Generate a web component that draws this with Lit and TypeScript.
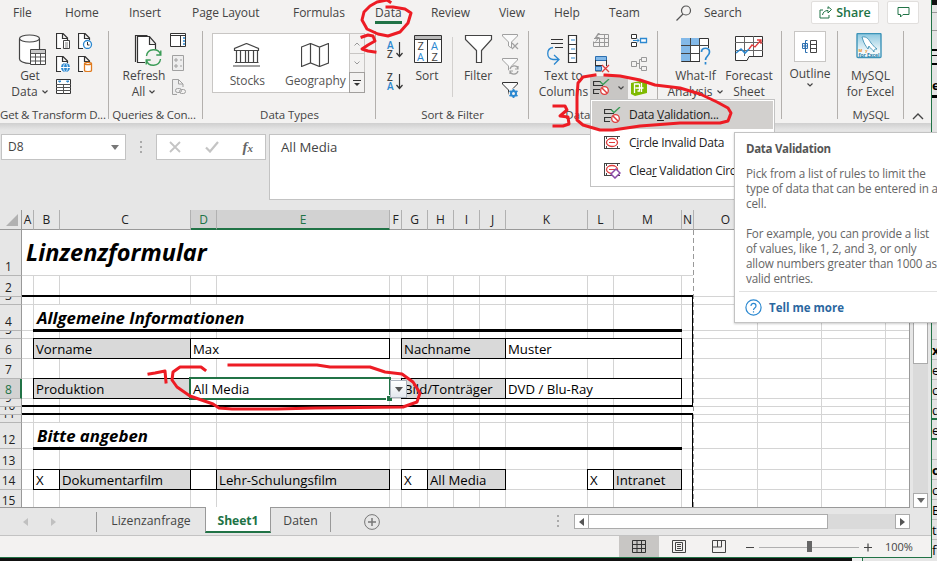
import { LitElement, html, svg, css, nothing } from "lit";
import { customElement } from "lit/decorators.js";
import { classMap } from "lit/directives/class-map.js";
import { styleMap } from "lit/directives/style-map.js";

const icon = (x: number, y: number, w: number, h: number, body: unknown) =>
  html`<svg class="ic" width=${w} height=${h} viewBox="${x} ${y} ${w} ${h}">${body}</svg>`;

const chevron = html`<svg class="chev" width="8" height="6" viewBox="0 0 8 6"><path d="M1.5 1.5 4 4 6.5 1.5" fill="none" stroke="#444" stroke-width="1.2"/></svg>`;

const page = (x: number, y: number) => svg`<path d="M${x + 5} ${y + 15.5}H${x + 0.5}V${y + 0.5}H${x + 7}L${x + 11.5} ${y + 5}V${y + 7}M${x + 6.5} ${y + 0.5}V${y + 5.5}H${x + 11.5}" fill="#fff" stroke="#333" stroke-width="1.2"/>`;

const validation = (x: number, y: number) => svg`
  <path d="M${x + 8} ${y + 2.5}H${x + 0.5}V${y + 6.5}H${x + 10}M${x + 7} ${y + 10.5}H${x + 0.5}V${y + 14.5}H${x + 6}" fill="none" stroke="#333" stroke-width="1.2"/>
  <path d="M${x + 7} ${y + 2.5}l3 3L${x + 16} ${y}" fill="none" stroke="#3a9b56" stroke-width="1.3"/>
  <circle cx=${x + 11.5} cy=${y + 11.5} r="3.8" fill="#fff" stroke="#e03c3c" stroke-width="1.3"/>
  <path d="M${x + 9} ${y + 9}l5 5" stroke="#e03c3c" stroke-width="1.5"/>`;

const funnel = (x: number, y: number, color: string) => svg`<path d="M${x + 0.5} ${y + 0.5}H${x + 15.5}V${y + 2}L${x + 9.5} ${y + 8}V${y + 14}L${x + 6.5} ${y + 12}V${y + 8}L${x + 0.5} ${y + 2}Z" fill="#fafafa" stroke=${color}/>`;

const smallFrame = (x: number, y: number) => svg`<path d="M${x} ${y + 0.5}h16M${x} ${y + 12.5}h16M${x + 2.5} ${y}v3m0 7v3M${x + 13.5} ${y}v3m0 7v3M${x + 0.5} ${y}v13" fill="none" stroke="#444"/><ellipse cx=${x + 8} cy=${y + 6.5} rx="5.5" ry="4" fill="#fff" stroke="#e03c3c" stroke-width="1.3"/><path d="M${x + 5} ${y + 6.5}h6" stroke="#e03c3c"/>`;

const COLS: [string, number][] = [
  ["A", 12], ["B", 26], ["C", 131], ["D", 26], ["E", 173], ["F", 12], ["G", 26], ["H", 26], ["I", 26],
  ["J", 26], ["K", 82], ["L", 26], ["M", 68], ["N", 12], ["O", 64], ["P", 64], ["Q", 64], ["", 24],
];
const ROWS = [46, 21, 8, 26, 8, 20, 20, 20, 8, 8, 8, 26, 21, 20, 20];

interface Cell { col: number; span: number; row: number; text: string; grey?: boolean }
const CELLS: Cell[] = [
  { col: 2, span: 2, row: 6, text: "Vorname", grey: true },
  { col: 4, span: 2, row: 6, text: "Max" },
  { col: 7, span: 4, row: 6, text: "Nachname", grey: true },
  { col: 11, span: 3, row: 6, text: "Muster" },
  { col: 2, span: 2, row: 8, text: "Produktion", grey: true },
  { col: 4, span: 2, row: 8, text: "All Media" },
  { col: 7, span: 4, row: 8, text: "Bild/Tonträger", grey: true },
  { col: 11, span: 3, row: 8, text: "DVD / Blu-Ray" },
  { col: 2, span: 1, row: 14, text: "X" },
  { col: 3, span: 1, row: 14, text: "Dokumentarfilm", grey: true },
  { col: 4, span: 1, row: 14, text: "" },
  { col: 5, span: 1, row: 14, text: "Lehr-Schulungsfilm", grey: true },
  { col: 7, span: 1, row: 14, text: "X" },
  { col: 8, span: 3, row: 14, text: "All Media", grey: true },
  { col: 12, span: 1, row: 14, text: "X" },
  { col: 13, span: 1, row: 14, text: "Intranet", grey: true },
];

@customElement("excel-ribbon")
class ExcelRibbon extends LitElement {
  static styles = css`
    :host { display: block; height: 123px; background: #f3f2f1; color: #444; font: 12px/16px "Open Sans", "Noto Sans", sans-serif; }
    svg { display: block; flex: none; }
    .tabs { height: 28px; padding-left: 13px; box-sizing: border-box; display: grid; grid-template-columns: 52px 64px 63px 101px 82px 56px 68px 55px 55px 67px 28px 106px 76px 45px; align-items: center; }
    .tab { line-height: 25px; height: 28px; white-space: nowrap; letter-spacing: -.05px; }
    .tab.on span { display: inline-block; height: 21px; border-bottom: 3px solid #217346; letter-spacing: .15px; }
    .btn { height: 23px; background: #fff; border: 1px solid #e1dfdd; border-radius: 2px; display: flex; align-items: center; justify-content: center; gap: 4px; color: #217346; font-weight: 600; font-size: 12.5px; box-sizing: border-box; margin-top: -3px; }
    .share { width: 68px; margin-left: 1px; }
    .note { width: 32px; margin-left: 1px; }
    .body { display: flex; height: 95px; }
    .group { position: relative; box-sizing: border-box; height: 95px; display: flex; flex-direction: column; }
    .group::after { content: ""; position: absolute; right: 0; top: 3px; height: 88px; width: 1px; background: #b3b0ad; }
    .row { display: flex; height: 78px; }
    .cap { text-align: center; line-height: 17px; height: 17px; white-space: nowrap; font-size: 11.5px; margin-top: 1px; letter-spacing: -.05px; }
    .g1 .cap, .g2 .cap { letter-spacing: -.2px; padding-right: 4px; }
    .big { display: flex; flex-direction: column; align-items: center; text-align: center; white-space: nowrap; box-sizing: border-box; }
    .big svg.ic { height: auto; margin: 6px 0 2px; }
    .ln { line-height: 16px; display: flex; align-items: center; gap: 3px; }
    .col { display: flex; flex-direction: column; padding-top: 5px; gap: 7px; }
    .g1 { width: 109px; } .g2 { width: 94px; } .g3 { width: 173px; } .g4 { width: 153px; }
    .g5 { width: 129px; } .g6 { width: 124px; } .g7 { width: 56px; } .g8 { width: 66px; }
    .get { width: 56px; padding-left: 4px; }
    .get svg.ic { margin-left: 5px; }
    .c2 { margin-left: 7px; }
    .refresh { width: 70px; }
    .refresh svg.ic { margin-left: 7px; }
    .qcol { margin-left: -9px; }
    .gallery { display: flex; margin: 5px 0 0 9px; width: 153px; height: 60px; box-sizing: border-box; border: 1px solid #c8c6c4; background: #fff; }
    .dt { display: flex; flex-direction: column; align-items: center; padding-top: 9px; gap: 6px; color: #555; box-sizing: border-box; letter-spacing: -.1px; }
    .dt1 { width: 69px; } .dt2 { width: 68px; }
    .arrows { margin-left: auto; width: 14px; display: grid; grid-template-rows: 20px 19px 20px; border-left: 1px solid #c8c6c4; }
    .arrows div { display: grid; place-items: center; background: #f3f2f1; border-bottom: 1px solid #c8c6c4; box-sizing: border-box; }
    .arrows div:last-child { outline: 1px solid #a19f9d; border: 0; height: 19px; }
    .az { width: 28px; padding: 13px 0 0 10px; gap: 13px; }
    .sort { width: 46px; margin-left: -10px; }
    .sep { width: 1px; height: 60px; background: #d2d0ce; margin: 9px 0 0 2px; }
    .filter { width: 50px; }
    .fcol { padding-top: 6px; margin-left: -1px; }
    .ttc { width: 66px; padding-left: 3px; }
    .ttc svg.ic { margin-left: -3px; }
    .t2 { gap: 6px; width: 38px; margin-left: -2px; }
    .dv { display: flex; align-items: center; gap: 7px; width: 38px; height: 23px; background: #c8c6c4; margin: -3px 0 0 -3px; padding-left: 3px; box-sizing: border-box; }
    .t3 { gap: 8px; }
    .whatif { width: 66px; padding-left: 9px; }
    .big.whatif svg.ic { margin: 8px 0 2px; }
    .forecast { width: 56px; margin-left: -3px; }
    .outline { width: 56px; }
    .obox { width: 30px; height: 29px; border: 1px solid #c8c6c4; background: #fff; display: grid; place-items: center; margin: 3px 0 4px; }
    .big .obox svg.ic { margin: 0; }
    .mysql { width: 65px; }
    .big.mysql svg.ic { margin: 5px 4px 5px 0; }
    .end { flex: 1; display: flex; align-items: flex-end; padding: 0 0 3px 8px; }
  `;
  render() {
    const blue = "#2b88d0";
    return html`
      <div class="tabs">
        ${["File", "Home", "Insert", "Page Layout", "Formulas", "Data", "Review", "View", "Help", "Team"].map((t) => html`<span class=${classMap({ tab: true, on: t === "Data" })}><span>${t}</span></span>`)}
        <svg width="18" height="18" viewBox="0 0 18 18"><g fill="none" stroke="#555" stroke-width="1.2"><circle cx="10" cy="5.500" r="4.500"/><path d="M7 9 .5 15.500"/></g></svg>
        <span class="tab">Search</span>
        <div class="btn share"><svg width="13" height="13" viewBox="0 0 13 13"><path d="M4 4H1v8h9V9M3.500 9C4 6 6 4.500 9 4.500V7l3.500-3.500L9 .7V3" fill="none" stroke="#217346"/></svg>Share</div>
        <div class="btn note"><svg width="13" height="11" viewBox="0 0 13 11"><path d="M1 .5h11v7H6L3.500 10V7.500H1z" fill="none" stroke="#217346"/></svg></div>
      </div>
      <div class="body">
        <div class="group g1">
          <div class="row">
            <div class="big get">
              ${icon(18, 34, 29, 32, svg`<path d="M20 40v19c2 3 5 4 10 4V49h9V40z" fill="#fff"/><path d="M19.500 39v20c0 2 4 4.500 11 4.500M39.500 39v10" fill="none" stroke="#444" stroke-width="1.2"/><ellipse cx="29.500" cy="38.500" rx="10" ry="3.500" fill="#fafafa" stroke="#444" stroke-width="1.2"/><path d="M30.500 49.500h15v15h-15z" fill="#fff" stroke="#444"/><path d="M31 50h14v3H31z" fill="#c8c8c8"/><path d="M30.500 53.500h15M30.500 57h15m-15 4h15M35.500 53v11m5-11v11" stroke="#555"/>`)}
              <span class="ln">Get</span><span class="ln">Data ${chevron}</span>
            </div>
            <div class="col">
              ${icon(56, 33, 15, 16, svg`${page(56, 33)}<path d="M63.500 40.500h6v8h-6z" fill="#fff" stroke="#444"/><path d="M65 43h3m-3 2h3m-3 2h3" stroke="#666" stroke-width=".8"/>`)}
              ${icon(56, 56, 15, 16, svg`${page(56, 56)}<circle cx="65.500" cy="67.500" r="4.500" fill=${blue}/><path d="M61 67.500h9" stroke="#fff"/><ellipse cx="65.500" cy="67.500" rx="2" ry="4.200" fill="none" stroke="#fff" stroke-width=".8"/>`)}
              ${icon(54, 79, 15, 16, svg`<path d="M54.500 79.500h14v14h-14z" fill="#fff" stroke="#333"/><path d="M54 84.500h15m-15 3h15m-15 3h15M61.500 84v10" stroke="#555"/><path d="m56.500 81 2.500 0-1.300 1.300zm8 0h2.500l-1.300 1.300z" fill=${blue} stroke=${blue}/>`)}
            </div>
            <div class="col c2">
              ${icon(78, 33, 15, 16, svg`${page(78, 33)}<circle cx="87.500" cy="44.500" r="4" fill="#fff" stroke=${blue} stroke-width="1.3"/><path d="M87.500 42v3h2" fill="none" stroke="#333"/>`)}
              ${icon(78, 56, 15, 16, svg`${page(78, 56)}<path d="M84.500 63.500c0-1.500 7-1.500 7 0v7c0 1.500-7 1.500-7 0zc0 1.500 7 1.500 7 0" fill="#fff" stroke="#e07b1f" stroke-width="1.300"/>`)}
            </div>
          </div>
          <div class="cap">Get &amp; Transform D...</div>
        </div>
        <div class="group g2">
          <div class="row">
            <div class="big refresh">
              ${icon(133, 34, 29, 32, svg`<path d="M135.500 62V35.500h12" fill="none" stroke="#333" stroke-width="1.200"/><path d="M145 62.500h-7.500V36.500h12l6 7v6M149.500 36.500v8h6" fill="#fff" stroke="#333" stroke-width="1.200"/><circle cx="153.500" cy="57.500" r="8" fill="#f3f2f1"/><path d="M146.500 56c1-8 12-8 14-1.500m.3-4v4.500h-4.500M160.500 59c-1 8-12 8-14 1.500m-.3 4V60h4.500" fill="none" stroke="#3a9b56" stroke-width="1.400"/>`)}
              <span class="ln">Refresh</span><span class="ln">All ${chevron}</span>
            </div>
            <div class="col qcol">
              ${icon(170, 35, 16, 14, svg`<path d="M170.500 35.500h15v13h-15z" fill="#fff" stroke="#333"/><path d="M170 37.500h16M180.500 38v10" stroke="#333"/><path d="M183 40h2m-2 3h2m-2 3h2" stroke=${blue} stroke-width="1.500"/>`)}
              ${icon(170, 57, 16, 17, svg`<path d="M172.500 58.500h11v15h-11z" fill="#eee" stroke="#a0a0a0"/><path d="M175 62h2v2h-2zm0 6h2v2h-2zm5 1h2m-2-6h2" fill="none" stroke="#a0a0a0"/>`)}
              ${icon(170, 81, 16, 17, svg`<path d="M177 97.500h-4.500V82.500h6l4.500 4.500v3M178.500 82.500V87h4.500" fill="#eee" stroke="#a0a0a0"/><rect x="175.500" y="91.500" width="6" height="4" rx="2" fill="none" stroke="#a0a0a0"/><rect x="179.500" y="92.500" width="6" height="4" rx="2" fill="none" stroke="#a0a0a0"/>`)}
            </div>
          </div>
          <div class="cap">Queries &amp; Con...</div>
        </div>
        <div class="group g3">
          <div class="row"><div class="gallery">
            <div class="dt dt1">${icon(233, 43, 28, 24, svg`<path d="M234.500 50.500v-2L246.500 43.500l12 5v2zM236.500 50v12.500M240.500 50v12.500M245.500 50v12.500M248.500 50v12.500M253.500 50v12.500M257.500 50v12.500M235 62.500h23.500M233 66h27" fill="none" stroke="#444" stroke-width="1.200"/>`)}<span>Stocks</span></div>
            <div class="dt dt2">${icon(301, 43, 28, 24, svg`<path d="m301.500 47 9-3.500 9 3.500 9-3.500V63l-9 3.500-9-3.500-9 3.500zM310.500 43.500V63M319.500 47v19.500" fill="none" stroke="#444" stroke-width="1.200"/>`)}<span>Geography</span></div>
            <div class="arrows">
              <div><svg width="6" height="4"><path d="M.5 3.500 3 1l2.500 2.500" fill="none" stroke="#999"/></svg></div>
              <div><svg width="6" height="4"><path d="M.5.500 3 3 5.500.5" fill="none" stroke="#999"/></svg></div>
              <div><svg width="8" height="6"><path d="M0 .5h8" stroke="#333"/><path d="M1 3l3 3 3-3z" fill="#333"/></svg></div>
            </div>
          </div></div>
          <div class="cap">Data Types</div>
        </div>
        <div class="group g4">
          <div class="row">
            <div class="col az">
              ${["AZ", "ZA"].map((s) => html`<svg width="18" height="19" viewBox="0 0 18 19" font-family="Open Sans" font-size="10" font-weight="600"><text x="1" y="8" fill=${s[0] === "A" ? blue : "#444"}>${s[0]}</text><text x="1" y="17" fill=${s[1] === "A" ? blue : "#444"}>${s[1]}</text><path d="M13.500 1v14.500M10.500 12l3 3.500 3-3.500" fill="none" stroke="#333" stroke-width="1.200"/></svg>`)}
            </div>
            <div class="big sort">
              ${icon(412, 34, 29, 32, svg`<path d="M413.500 35.500h27v27h-27z" fill="#fff" stroke="#333"/><path d="M414 36h26v3h-26z" fill="#bbb"/><path d="M413.500 39.500h27M426.500 39v23" stroke="#333"/><g font-family="Open Sans" font-size="11"><text x="416.500" y="50" fill="#444">Z</text><text x="416" y="60.500" fill=${blue}>A</text><text x="430" y="50" fill=${blue}>A</text><text x="430.500" y="60.500" fill="#444">Z</text></g>`)}
              <span class="ln">Sort</span>
            </div>
            <div class="sep"></div>
            <div class="big filter">
              ${icon(463, 34, 29, 32, svg`<path d="M464.500 35.500h26v4l-10 11v12h-5v-12l-11-11z" fill="#fff" stroke="#444" stroke-width="1.200"/>`)}
              <span class="ln">Filter</span>
            </div>
            <div class="col fcol">
              ${icon(502, 34, 18, 17, svg`${funnel(502, 34, "#a0a0a0")}<path d="m512 43 6 6m0-6-6 6" stroke="#a0a0a0" stroke-width="1.200"/>`)}
              ${icon(502, 58, 18, 17, svg`${funnel(502, 58, "#a0a0a0")}<circle cx="514" cy="70" r="5" fill="#f3f2f1"/><path d="M510 69c1-4 7-4 8-.5m0-2.500v3h-3M518 71c-1 4-7 4-8 .5m0 2.500v-3h3" fill="none" stroke="#a0a0a0" stroke-width="1.200"/>`)}
              ${icon(502, 82, 18, 17, svg`${funnel(502, 82, "#333")}<circle cx="513.500" cy="93.500" r="5" fill="#f3f2f1"/><circle cx="513.500" cy="93.500" r="2.500" fill="none" stroke=${blue} stroke-width="2"/><path d="M513.500 89v2M513.500 96v2M509.500 91l1.700 1M515.800 95l1.700 1M509.500 96l1.700-1M515.800 92l1.700-1" stroke=${blue} stroke-width="1.800"/>`)}
            </div>
          </div>
          <div class="cap">Sort &amp; Filter</div>
        </div>
        <div class="group g5">
          <div class="row">
            <div class="big ttc">
              ${icon(546, 34, 32, 32, svg`<path d="M551 39.500h12M551 43.500h12M555 47.500h8" stroke="#333" stroke-width="1.200"/><path d="M568.500 35.500h8v27h-8zM568 44.500h9m-9 9h9" fill="#fff" stroke="#333" stroke-width="1.200"/><path d="M571 40h4m-4 9h4m-4 9h4" stroke=${blue}/><path d="M553 47.500c-7 1-7 11 0 12h5.500m-4.500-4.500 5 4.500-5 5" fill="none" stroke=${blue} stroke-width="1.300"/>`)}
              <span class="ln">Text to</span><span class="ln">Columns</span>
            </div>
            <div class="col t2">
              ${icon(593, 33, 17, 17, svg`<path d="M597.500 34.500h11v12h-15v-5M594 42.500h15M594 38.500h15M599.500 38v9M604.500 34v12" fill="none" stroke="#999"/><path d="m598 33-4 6h3l-3 5 6-7h-3l3-4z" fill="#999"/>`)}
              ${icon(593, 56, 17, 17, svg`<path d="M595.500 56.500h11v4h-11z" fill="#83b9e8" stroke="#2b6fb0"/><path d="M606.500 60v6M595.500 60v11h6M595 65.500h8" fill="none" stroke="#333"/><path d="M595.500 66.500h6v4h-6z" fill="#83b9e8" stroke="#2b6fb0"/><path d="m602 65 7 7m0-7-7 7" stroke="#e03c3c" stroke-width="1.300"/>`)}
              <div class="dv">${icon(593, 79, 17, 17, validation(593, 79))}${chevron}</div>
            </div>
            <div class="col t3">
              ${icon(631, 33, 17, 15, svg`<path d="M631.500 34.500h5v4h-5zm0 8h5v4h-5z" fill="#fff" stroke="#333"/><path d="M640.500 38.500h6v4h-6z" fill="#fff" stroke=${blue} stroke-width="1.300"/><path d="M633 40.500h6m-2-2 2 2-2 2" fill="none" stroke=${blue}/>`)}
              ${icon(631, 56, 17, 16, svg`<path d="M631.500 61.500h5v5h-5zM641.500 57.500h5v4h-5zm0 9h5v4h-5zM637 63.500h2.500M641 59.500h-1.500v9h1.500" fill="none" stroke="#999"/>`)}
              ${icon(631, 80, 17, 17, svg`<path d="M631 83 644 80l3 3v10L635 96l-4-2z" fill="#7fba00"/><path d="M634.500 93V84h5m0 0v7h-2m4-8v9m-6-4h8" fill="none" stroke="#fff" stroke-width="1.300"/>`)}
            </div>
          </div>
          <div class="cap">Data Tools</div>
        </div>
        <div class="group g6">
          <div class="row">
            <div class="big whatif">
              ${icon(680, 36, 32, 30, svg`<path d="M681.500 38.500h27v23h-27z" fill="#fff" stroke="#333"/><path d="M681 38h10v23h-10zM691 38h9v7h-9z" fill="#83b9e8"/><path d="M681 45.500h28M681 53.500h28M690.500 38v23M699.500 38v23" stroke="#444"/><path d="M700 48h12v18h-12z" fill="#f3f2f1"/><path d="M701.500 52c0-5 8-5 8 0 0 4-4 4-4 8m0 2v2.500" fill="none" stroke="#2b88d0" stroke-width="1.700"/>`)}
              <span class="ln">What-If</span><span class="ln">Analysis ${chevron}</span>
            </div>
            <div class="big forecast">
              ${icon(734, 34, 30, 32, svg`<path d="M735.500 36.500h27v20H749l-2 4h-11.500z" fill="#fff" stroke="#333"/><path d="M735 42.500h28M735 50.500h28M744.500 36v20M753.500 36v20" stroke="#666"/><path d="m736 53 5-4 4 4 4-4" fill="none" stroke=${blue} stroke-width="1.600"/><path d="m749 49 3-4 3 2 6-7m-4 0h4v4" fill="none" stroke="#e03c3c" stroke-width="1.300"/>`)}
              <span class="ln">Forecast</span><span class="ln">Sheet</span>
            </div>
          </div>
          <div class="cap">${nothing}</div>
        </div>
        <div class="group g7"><div class="row"><div class="big outline">
          <div class="obox">${icon(802, 38, 16, 16, svg`<path d="M807.500 39.500h-2v12h2M802.500 42.500h5v5h-5zM805 43v4m-2-2h4" fill="none" stroke="#2b6fb0"/><path d="M810.500 39.500h6v12h-6zm0 4h6m-6 4h6" fill="none" stroke="#444"/>`)}</div>
          <span class="ln">Outline</span><span class="ln">${chevron}</span>
        </div></div></div>
        <div class="group g8"><div class="row"><div class="big mysql">
          ${icon(855, 33, 26, 30, svg`<defs><linearGradient id="sky" x2="0" y2="1"><stop stop-color="#8cc8e0"/><stop offset=".75" stop-color="#f2f8fa"/></linearGradient></defs><rect x="856" y="33.500" width="24" height="24" rx="1" fill="url(#sky)" stroke="#3d94b8" stroke-width="1.400"/><path d="M861 37c5-1 7 3 9 6 2 2 3 4 6 6-3 0-3 1-3 3-2-4-4-3-5-6l-1 3c-3-4-4-6-5-9z" fill="#fff" stroke="#2f86ad" stroke-width=".8"/><text x="857.500" y="51.500" font-size="4" font-family="Open Sans" font-weight="700" fill="#e8922a" textLength="9">My</text><text x="857.500" y="56.500" font-size="5" font-family="Open Sans" font-weight="700" fill="#2b7fa8" textLength="21">for Excel</text>`)}
          <span class="ln">MySQL</span><span class="ln">for Excel</span>
        </div></div><div class="cap">MySQL</div></div>
        <div class="end"><svg width="12" height="8" viewBox="0 0 12 8"><path d="m1 7 5-5 5 5" fill="none" stroke="#444" stroke-width="1.400"/></svg></div>
      </div>`;
  }
}

@customElement("sheet-grid")
class SheetGrid extends LitElement {
  static styles = css`
    :host { display: block; width: 910px; height: 298px; overflow: hidden; isolation: isolate; box-sizing: border-box; border-right: 1px solid #999; font: 12px/16px "Open Sans", "Noto Sans", sans-serif; color: #000; }
    .grid { display: grid; background: #fff; position: relative; }
    .corner { grid-area: 1/1; background: #e6e6e6; border-right: 1px solid #999; border-bottom: 1px solid #999; display: flex; justify-content: flex-end; align-items: flex-end; padding: 0 3px 3px 0; }
    .tri { border-left: 12px solid transparent; border-bottom: 12px solid #b1b1b1; }
    .ch { grid-row: 1; background: #e6e6e6; border-right: 1px solid #b1b1b1; border-bottom: 1px solid #999; line-height: 20px; color: #222; white-space: nowrap; overflow: hidden; display: flex; justify-content: center; }
    .ch.sel { background: #d2d2d2; color: #217346; border-bottom: 2px solid #217346; }
    .rh { grid-column: 1; background: #e6e6e6; border-right: 1px solid #999; border-bottom: 1px solid #b5b5b5; overflow: hidden; display: flex; align-items: flex-end; justify-content: center; padding-right: 4px; color: #222; }
    .rh.tiny { align-items: flex-start; }
    .rh.tiny span { margin-top: -9px; }
    .rh.sel { background: #d2d2d2; color: #217346; border-right: 2px solid #217346; padding-right: 3px; }
    .c { border-right: 1px solid #d4d4d4; border-bottom: 1px solid #d4d4d4; }
    .cell { border: 1px solid #000; margin: -1px 0 0 -1px; background: #fff; padding-left: 2px; font-size: 13.2px; line-height: 20px; white-space: nowrap; overflow: hidden; z-index: 1; }
    .cell.grey { background: #d9d9d9; }
    .title { z-index: 1; font-style: italic; font-weight: 700; background: #fff; white-space: nowrap; }
    .t1 { grid-area: 2/2/3/16; font-size: 23.5px; line-height: 45px; padding-left: 4px; border-bottom: 1px solid #d4d4d4; }
    .t4 { grid-area: 5/3/6/7; font-size: 16.8px; line-height: 25px; padding-left: 3px; margin: 0 1px 3px 0; }
    .t12 { grid-area: 13/3/14/5; font-size: 16.8px; line-height: 25px; padding-left: 3px; margin: 0 1px 3px 0; }
    .thick { z-index: 2; height: 3px; background: #000; align-self: end; margin: 0 0 -1px -1px; }
    .k4 { grid-area: 5/3/6/15; }
    .k12 { grid-area: 13/3/14/15; }
    .box { z-index: 2; border: 2px solid #000; border-left: 0; border-right-width: 1px; margin: -2px 1px 0 0; }
    .b1 { grid-area: 4/2/11/16; height: 108px; }
    .b2 { grid-area: 12/2/17/16; border-bottom: 0; }
    .dash { grid-area: 2/15/17/16; z-index: 1; justify-self: end; width: 1px; background: repeating-linear-gradient(#999 0 5px, #fff 5px 8px); }
    .pick { grid-area: 9/5/10/7; z-index: 3; border: 2px solid #217346; margin: -2px -1px -1px -2px; }
    .knob { grid-area: 9/6/10/7; z-index: 4; justify-self: end; align-self: end; width: 5px; height: 5px; background: #217346; border: solid #fff; border-width: 1px 0 0 1px; margin: 0 -2px -2px 0; }
    .drop { grid-area: 9/7/10/9; z-index: 4; width: 15px; height: 16px; margin-top: 1px; background: linear-gradient(#fff, #e4e8ee); border: 1px solid #acb3bd; display: grid; place-items: center; }
    .drop i { border: 4px solid transparent; border-top: 5px solid #555; border-bottom: 0; }
  `;
  render() {
    const tracks = { gridTemplateColumns: "22px " + COLS.map((c) => c[1] + "px").join(" "), gridTemplateRows: "20px " + ROWS.map((r) => r + "px").join(" ") };
    return html`<div class="grid" style=${styleMap(tracks)}>
      <div class="corner"><div class="tri"></div></div>
      ${COLS.map(([n], i) => html`<div class=${classMap({ ch: true, sel: n === "D" || n === "E" })} style=${styleMap({ gridColumn: String(i + 2) })}>${n}</div>`)}
      ${ROWS.map((h, r) => html`
        <div class=${classMap({ rh: true, tiny: h < 10, sel: r === 7 })} style=${styleMap({ gridRow: String(r + 2) })}><span>${r + 1}</span></div>
        ${COLS.map((_, c) => r === 0 ? nothing : html`<div class="c" style=${styleMap({ gridArea: `${r + 2}/${c + 2}` })}></div>`)}`)}
      <div class="title t1">Linzenzformular</div>
      <div class="title t4">Allgemeine Informationen</div>
      <div class="title t12">Bitte angeben</div>
      ${CELLS.map((k) => html`<div class=${classMap({ cell: true, grey: !!k.grey })} style=${styleMap({ gridArea: `${k.row + 1}/${k.col + 1}/${k.row + 2}/${k.col + 1 + k.span}` })}>${k.text}</div>`)}
      <div class="thick k4"></div><div class="thick k12"></div>
      <div class="box b1"></div><div class="box b2"></div>
      <div class="dash"></div>
      <div class="pick"></div><div class="knob"></div><div class="drop"><i></i></div>
    </div>`;
  }
}

@customElement("app-root")
class AppRoot extends LitElement {
  static styles = css`
    :host { display: block; position: relative; width: 937px; height: 561px; overflow: hidden; background: #111; font: 12px/16px "Open Sans", "Noto Sans", sans-serif; color: #444; }
    svg { display: block; }
    .desk { display: flex; height: 558px; }
    .win { width: 931px; height: 557px; border-right: 1px solid #217346; border-bottom: 1px solid #217346; background: #e6e6e6; }
    .behind { width: 5px; height: 558px; overflow: hidden; background: #e4e4e4; color: #000; font-size: 13px; line-height: 20px; }
    .behind div { height: 20px; box-sizing: border-box; border-bottom: 1px solid #bbb; }
    .behind .top { height: 5px; background: #111; border: 0; }
    .behind .lines { height: 70px; border: 0; background: linear-gradient(#0000 7px, #999 7px 8px, #0000 8px 25px, #999 25px 26px, #0000 26px 44px, #000 44px 46px, #0000 46px 50px, #000 50px 51px, #0000 51px 58px, #000 58px 60px, #0000 60px); }
    .behind .head { height: 23px; font-weight: 700; border-bottom: 3px solid #000; }
    .behind .gap { height: 242px; }
    .behind .g { border-bottom: 2px solid #217346; }
    .behind .bold { font-weight: 700; }
    .fbar { display: flex; height: 87px; box-sizing: border-box; padding: 11px 0 0 1px; background: linear-gradient(#cfcfcf, #e6e6e6 7px); }
    .name, .fx, .formula { height: 26px; box-sizing: border-box; border: 1px solid #c3c3c3; background: #fff; }
    .name { width: 125px; display: flex; align-items: center; justify-content: space-between; padding: 0 6px; }
    .name i { border: 4px solid transparent; border-top: 5px solid #777; border-bottom: 0; }
    .dots { width: 30px; display: grid; justify-content: center; align-content: center; gap: 3px; height: 26px; }
    .dots i { width: 2px; height: 2px; background: #aaa; }
    .fx { width: 110px; display: flex; align-items: center; justify-content: space-between; padding: 0 12px; margin-right: 3px; color: #444; }
    .fx em { font: italic 700 15px/18px "Liberation Serif", serif; color: #666; }
    .fx small { font-size: 11px; }
    .formula { width: 661px; height: 66px; padding: 4px 11px; font-size: 13.2px; }
    .mid { display: flex; height: 298px; }
    .vs { width: 15px; margin-left: 3px; height: 298px; background: #dadada; display: flex; flex-direction: column; justify-content: space-between; }
    .thumb { height: 154px; box-sizing: border-box; background: #fff; border: 1px solid #ababab; }
    .sb { width: 15px; height: 15px; flex: none; box-sizing: border-box; background: #fff; border: 1px solid #ababab; display: grid; place-items: center; }
    .tabsbar { display: flex; height: 28px; width: 910px; border-top: 1px solid #999; align-items: flex-start; margin-top: -1px; box-sizing: border-box; position: relative; }
    .nav { width: 97px; flex: none; box-sizing: border-box; height: 20px; margin-top: 4px; border-right: 1px solid #999; display: flex; gap: 23px; padding: 6px 0 0 23px; }
    .tab { line-height: 24px; white-space: nowrap; font-size: 12.2px; flex: none; }
    .liz { width: 108px; padding-top: 1px; text-align: center; letter-spacing: .06px; }
    .s1 { width: 66px; height: 26px; box-sizing: border-box; background: #fff; color: #217346; font-weight: 700; letter-spacing: -.1px; text-align: center; border: 1px solid #999; border-width: 0 1px 2px; border-bottom-color: #217346; margin-top: -1px; line-height: 27px; }
    .da { width: 59px; text-align: center; height: 20px; line-height: 17px; margin-top: 4px; border-right: 1px solid #999; }
    .plus { margin: 6px 0 0 33px; flex: none; }
    .sd { flex: none; margin-left: 163px; }
    .hs { flex: none; margin-left: auto; margin-top: 6px; width: 336px; height: 15px; display: flex; background: #dadada; }
    .hthumb { width: 240px; height: 15px; box-sizing: border-box; background: #fff; border: 1px solid #ababab; margin-left: -1px; margin-right: auto; }
    .status { height: 21px; border-top: 1px solid #c3c3c3; background: #f3f2f1; display: flex; align-items: center; padding-left: 619px; font-size: 11px; }
    .vb { width: 40px; height: 21px; display: grid; place-items: center; }
    .vb.on { background: #c8c6c4; }
    .zoom { margin: 0 13px 0 5px; }
    .menu { position: absolute; left: 590px; top: 99px; width: 185px; height: 88px; box-sizing: border-box; background: #fff; border: 1px solid #c3c3c3; padding: 1px; color: #222; letter-spacing: -.28px; }
    .mi { height: 28px; display: flex; align-items: center; gap: 8px; padding-left: 12px; white-space: nowrap; overflow: hidden; }
    .mi.hot { background: #d2d0ce; }
    .tip { position: absolute; left: 734px; top: 132px; width: 203px; height: 191px; box-sizing: border-box; border: 1px solid #c3c3c3; border-right: 0; background: #fff; padding: 8px 0 0 11px; line-height: 15px; color: #666; box-shadow: 0 1px 2px #0003; white-space: nowrap; }
    .tip h4 { margin: 0 0 10px; font-size: 11.5px; line-height: 15px; letter-spacing: -.3px; color: #555; }
    .tip p { margin: 0 0 15px; font-size: 11.7px; letter-spacing: -.16px; }
    .tip .more { margin: -10px 0 0 -7px; border-top: 1px solid #e1e1e1; padding: 7px 0 0 6px; display: flex; gap: 7px; align-items: center; color: #2b679f; font-weight: 700; font-size: 11.5px; }
    .ink { position: absolute; left: 0; top: 0; pointer-events: none; }
    .strip { display: flex; height: 3px; padding-left: 852px; }
    .strip i { height: 3px; width: 10px; background: #eee; }
    .strip i + i { width: 75px; border-left: 1px solid #217346; background: #e6e6e6; }
  `;
  render() {
    return html`
      <div class="desk">
        <div class="win">
          <excel-ribbon></excel-ribbon>
          <div class="fbar">
            <div class="name">D8<i></i></div>
            <div class="dots"><i></i><i></i><i></i></div>
            <div class="fx">
              <svg width="12" height="12"><path d="m1 1 10 10M11 1 1 11" stroke="#c4c4c4" stroke-width="1.800"/></svg>
              <svg width="14" height="12"><path d="m1 6.500 4 4L13 1" fill="none" stroke="#c4c4c4" stroke-width="2.200"/></svg>
              <em>f<small>x</small></em>
            </div>
            <div class="formula">All Media</div>
          </div>
          <div class="mid">
            <sheet-grid></sheet-grid>
            <div class="vs"><div class="thumb"></div><div class="sb"><svg width="8" height="5"><path d="M0 0h8L4 5z" fill="#666"/></svg></div></div>
          </div>
          <div class="tabsbar">
            <div class="nav"><svg width="5" height="8"><path d="M5 0v8L0 4z" fill="#c0c0c0"/></svg><svg width="5" height="8"><path d="M0 0v8l5-4z" fill="#c0c0c0"/></svg></div>
            <div class="tab liz">Lizenzanfrage</div><div class="s1 tab">Sheet1</div><div class="tab da">Daten</div>
            <svg class="plus" width="16" height="16"><circle cx="8" cy="8" r="7.400" fill="none" stroke="#777"/><path d="M8 4v8M4 8h8" stroke="#777" stroke-width="1.500"/></svg>
            <div class="dots sd"><i></i><i></i><i></i></div>
            <div class="hs"><div class="sb"><svg width="5" height="8"><path d="M5 0v8L0 4z" fill="#555"/></svg></div><div class="hthumb"></div><div class="sb"><svg width="5" height="8"><path d="M0 0v8l5-4z" fill="#555"/></svg></div></div>
          </div>
          <div class="status">
            <div class="vb on"><svg width="14" height="13"><path d="M.5.500h13v12H.5zM0 4.500h14M0 8.500h14M5 0v13M9.500 0v13" fill="none" stroke="#333"/></svg></div>
            <div class="vb"><svg width="14" height="13"><path d="M.5.500h13v12H.5zM3.500 2.500h7v8h-7zM5 4.500h4m-4 2h4m-4 2h4" fill="none" stroke="#444"/></svg></div>
            <div class="vb"><svg width="14" height="13"><path d="M.5.500h13v12H.5zM5.500 0v7M9.500 0v7H1" fill="none" stroke="#444"/></svg></div>
            <svg class="zoom" width="128" height="13"><path d="M2 7.500h8M120 7.500h8M124 3.500v8" stroke="#444" stroke-width="1.200"/><path d="M15 7.500h100" stroke="#b0b0b0"/><path d="M63 1h5v11h-5z" fill="#666"/></svg>
            <span>100%</span>
          </div>
        </div>
        <div class="behind"><div class="top"></div><div class="lines"></div><div class="head">e</div><div class="gap"></div>${["xt", "e", "c", "d", "et", "", "o", "c", "B", "t", "ff"].map((s, i) => html`<div class=${classMap({ g: i === 3 || i === 4, bold: i === 0 || i === 6 })}>${s}</div>`)}</div>
      </div>
      <div class="strip"><i></i><i></i></div>
      <div class="menu">
        <div class="mi hot">${icon(0, 0, 17, 16, validation(0, 0))}<span>Data <u>V</u>alidation...</span></div>
        <div class="mi">${icon(0, 0, 17, 14, smallFrame(0, 0))}<span>C<u>i</u>rcle Invalid Data</span></div>
        <div class="mi">${icon(0, 0, 17, 16, svg`${smallFrame(0, 0)}<path d="m7 11 5-5 4 4-5 5z" fill="#fff" stroke="#8a4ba8" stroke-width="1.500"/>`)}<span>Clea<u>r</u> Validation Circles</span></div>
      </div>
      <div class="tip">
        <h4>Data Validation</h4>
        <p>Pick from a list of rules to limit the<br>type of data that can be entered in a<br>cell.</p>
        <p>For example, you can provide a list<br>of values, like 1, 2, and 3, or only<br>allow numbers greater than 1000 as<br>valid entries.</p>
        <div class="more"><svg width="17" height="17"><circle cx="8.500" cy="8.500" r="7.600" fill="none" stroke="#2b88d0" stroke-width="1.200"/><path d="M6 7c0-3.500 5-3.500 5 0 0 2-2.500 2-2.500 4m0 1.200v1.300" fill="none" stroke="#2b88d0" stroke-width="1.200"/></svg>Tell me more</div>
      </div>
      <svg class="ink" width="937" height="561" viewBox="0 0 937 561">
        <g fill="none" stroke="#ed1c24" stroke-width="3" stroke-linejoin="round" stroke-linecap="square">
          <path d="M390 2 387 0 377 2 370 6 364 12 362 20 367 29 378 34 388 36 400 32 408 23 411 13 405 9 393 7 387 7"/>
          <path d="M362 37 368 35 373 36 375 41 368 45 362 49 368 51 375 52"/>
          <path d="M605 75 620 76 640 80 655 85 680 88 700 94 717 102 728 108 731 113 728 121 720 123 680 123 640 126 613 130 600 130 583 125 577 120 577 97 578 83 583 77 595 75"/>
          <path d="M554 106 565 106 567 110 560 116 568 117 569 124 563 126 554 126"/>
          <path d="M205 370 201 367 180 367 173 372 172 380 177 387 190 396 213 404 219 408 232 409 277 409 315 408 403 407 417 402 420 393 413 382 402 374 385 372 370 367 330 367 317 365 229 365"/>
          <path d="M149 374 155 373 165 371 166 382"/>
        </g>
      </svg>`;
  }
}
